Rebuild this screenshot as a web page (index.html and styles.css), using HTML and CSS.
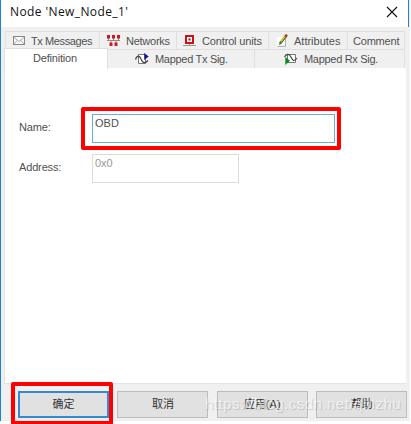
FILE: index.html
```html
<!DOCTYPE html>
<html lang="zh">
<head>
<meta charset="utf-8">
<title>Node 'New_Node_1'</title>
<link rel="stylesheet" href="styles.css">
</head>
<body>
<div class="dialog">
  <header class="titlebar">
    <span class="title">Node 'New_Node_1'</span>
    <svg class="close" width="12" height="12" viewBox="0 0 12 12"><path d="M1 1L11 11M11 1L1 11" stroke="#111" stroke-width="1.1" fill="none"/></svg>
  </header>
  <div class="tabs upper">
    <div class="tab t-msg">
      <svg width="14" height="11" viewBox="0 0 14 11"><rect x="1.500" y="1.500" width="11" height="8" fill="#f8f8f8" stroke="#888"/><path d="M1.500 2L7 6.500 12.500 2M1.500 9.500l4-4.300M12.500 9.500l-4-4.300" fill="none" stroke="#999" stroke-width=".8"/></svg>
      <span>Tx Messages</span>
    </div>
    <div class="tab t-net">
      <svg width="15" height="12" viewBox="0 0 15 12"><path d="M1 5.500H14M2.500 3v3M7.500 3v3M12.500 3v3M5 6v3M10 6v3" stroke="#777" fill="none" stroke-width=".8"/><path d="M1 0h3v3.500H1zM6 0h3v3.500H6zM11 0h3v3.500h-3zM3.500 7.500h3V11h-3zM8.500 7.500h3V11h-3z" fill="#cf1820"/></svg>
      <span>Networks</span>
    </div>
    <div class="tab t-ctl">
      <svg width="15" height="12" viewBox="0 0 15 12"><path d="M1 10.500H14M7.500 9v2" stroke="#999" fill="none"/><rect x="4" y="1" width="7" height="7" fill="#fff" stroke="#d01018" stroke-width="2"/><path d="M6.500 3.500h2v2h-2z" fill="#811"/></svg>
      <span>Control units</span>
    </div>
    <div class="tab t-att">
      <svg width="13" height="13" viewBox="0 0 13 13"><path d="M1 3h8.500v9.500H1z" fill="#fff"/><path d="M1.500 12.300h8V4" stroke="#aaa" fill="none"/><path d="M4 9.500L10 2" stroke="#477b18" stroke-width="2.600"/><path d="M5 7.600L9.300 2.200" stroke="#e2d229" stroke-width="1.100"/><path d="M9.300 2.600L11 .8" stroke="#c72b20" stroke-width="2.600"/><path d="M3 11l.7-2 1.300 1z" fill="#333"/></svg>
      <span>Attributes</span>
    </div>
    <div class="tab t-com"><span>Comment</span></div>
  </div>
  <div class="tabs lower">
    <div class="tab t-def"><span>Definition</span></div>
    <div class="tab t-tx">
      <svg width="14" height="12" viewBox="0 0 14 12"><path d="M3.500 1.500h7v9h-7z" fill="#fff" stroke="#777"/><path d="M.5 6.500C2 2 4.500 2 6 6s4 5 7 1.500" stroke="#444" stroke-width="1.200" fill="none"/><path d="M9.200 0L13.700 3.500 9.200 7z" fill="#15159a"/></svg>
      <span>Mapped Tx Sig.</span>
    </div>
    <div class="tab t-rx">
      <svg width="14" height="12" viewBox="0 0 14 12"><path d="M3.500 1.500h8v8h-8z" fill="#fff" stroke="#777"/><path d="M.5 4C2 1 5 0 7 4s3 5 6 1" stroke="#444" stroke-width="1.200" fill="none"/><path d="M1.300 4L6 7.800 1.300 12z" fill="#078a16"/></svg>
      <span>Mapped Rx Sig.</span>
    </div>
  </div>
  <main class="panel">
    <div class="row">
      <label>Name:</label>
      <div class="field name"><span>OBD</span><i class="mark"></i></div>
    </div>
    <div class="row">
      <label>Address:</label>
      <div class="field address"><span>0x0</span></div>
    </div>
  </main>
  <footer class="actions">
    <div class="button primary">确定<i class="mark"></i></div>
    <div class="button">取消</div>
    <div class="button">应用(A)</div>
    <div class="button">帮助</div>
    <span class="watermark">https://blog.csdn.net/qinzhu</span>
  </footer>
</div>
</body>
</html>
```
FILE: styles.css
```css
* { box-sizing: border-box; }
body {
  margin: 0;
  height: 424px;
  overflow: hidden;
  background: #fff;
  color: #505050;
  font: 11px/14px "Liberation Sans", "Noto Sans CJK SC", sans-serif;
}
svg { display: block; flex: none; }
.dialog {
  width: 410px;
  height: 421px;
  border-left: 1px solid #1883d7;
  background: #f0f0f0;
}
.titlebar {
  width: 408px;
  height: 27px;
  padding: 0 10px 3px 9px;
  display: flex;
  align-items: center;
  justify-content: space-between;
  background: #fff;
  border-right: 1px solid #1883d7;
}
.title {
  color: #111;
  font: 12px/16px "Open Sans", sans-serif;
  letter-spacing: .4px;
  white-space: nowrap;
}
.tabs { display: flex; }
.tab {
  display: flex;
  align-items: center;
  white-space: nowrap;
  border-right: 1px solid #dfdfdf;
  border-top: 1px solid #dfdfdf;
}
.tab svg { margin-right: 5px; }
.upper { padding: 4px 0 0 4px; height: 22px; }
.lower { padding-left: 3px; height: 19px; }
.t-msg { width: 95px; padding-left: 6px; border-left: 1px solid #dfdfdf; letter-spacing: -.4px; }
.t-net { width: 77px; padding-left: 6px; letter-spacing: -.25px; }
.t-ctl { width: 92px; padding-left: 5px; letter-spacing: -.15px; }
.t-att { width: 79px; padding-left: 7px; }
.t-com { width: 57px; padding-left: 5px; letter-spacing: -.2px; }
.t-def {
  width: 104px;
  height: 21px;
  margin-top: -1px;
  padding: 0 0 2px 28px;
  background: #fff;
  border-left: 1px solid #dfdfdf;
  letter-spacing: -.2px;
}
.t-tx { width: 147px; padding-left: 27px; letter-spacing: -.3px; }
.t-rx { width: 150px; padding-left: 29px; letter-spacing: -.3px; }
.t-tx svg, .t-rx svg { margin-right: 6px; }
.panel {
  width: 403px;
  height: 316px;
  margin-left: 3px;
  padding: 46px 0 0 14px;
  background: #fff;
  border: 1px solid #e3e3e3;
  border-top: 0;
  border-right-color: #f0f0f0;
}
.row { display: flex; height: 40px; }
.row label { width: 73px; padding-top: 6px; letter-spacing: -.15px; }
.field {
  position: relative;
  height: 29px;
  padding: 1px 2px;
  border: 1px solid #dcdcdc;
}
.name { width: 243px; border-color: #68abe0; }
.address { width: 147px; color: #999; }
.mark {
  position: absolute;
  border: 4px solid #f00;
  border-radius: 2px;
}
.name .mark { inset: -8px -7px -8px -12px; }
.actions {
  position: relative;
  display: flex;
  gap: 8.4px;
  padding: 7px 0 0 17px;
}
.button {
  position: relative;
  width: 91px;
  height: 27px;
  border: 1px solid #bcbcbc;
  background: #e1e1e1;
  color: #333;
  text-align: center;
  font-size: 11px;
  line-height: 25px;
}
.primary { border: 2px solid #3389d4; line-height: 23px; }
.primary .mark { inset: -11px -6px -9px -9px; }
.watermark {
  position: absolute;
  left: 204px;
  top: 10px;
  color: rgba(255, 255, 255, .65);
  font: 15px/20px "Liberation Sans", sans-serif;
  letter-spacing: .48px;
  text-shadow: 1px 1px 1px rgba(0, 0, 0, .15);
  white-space: nowrap;
}
```
